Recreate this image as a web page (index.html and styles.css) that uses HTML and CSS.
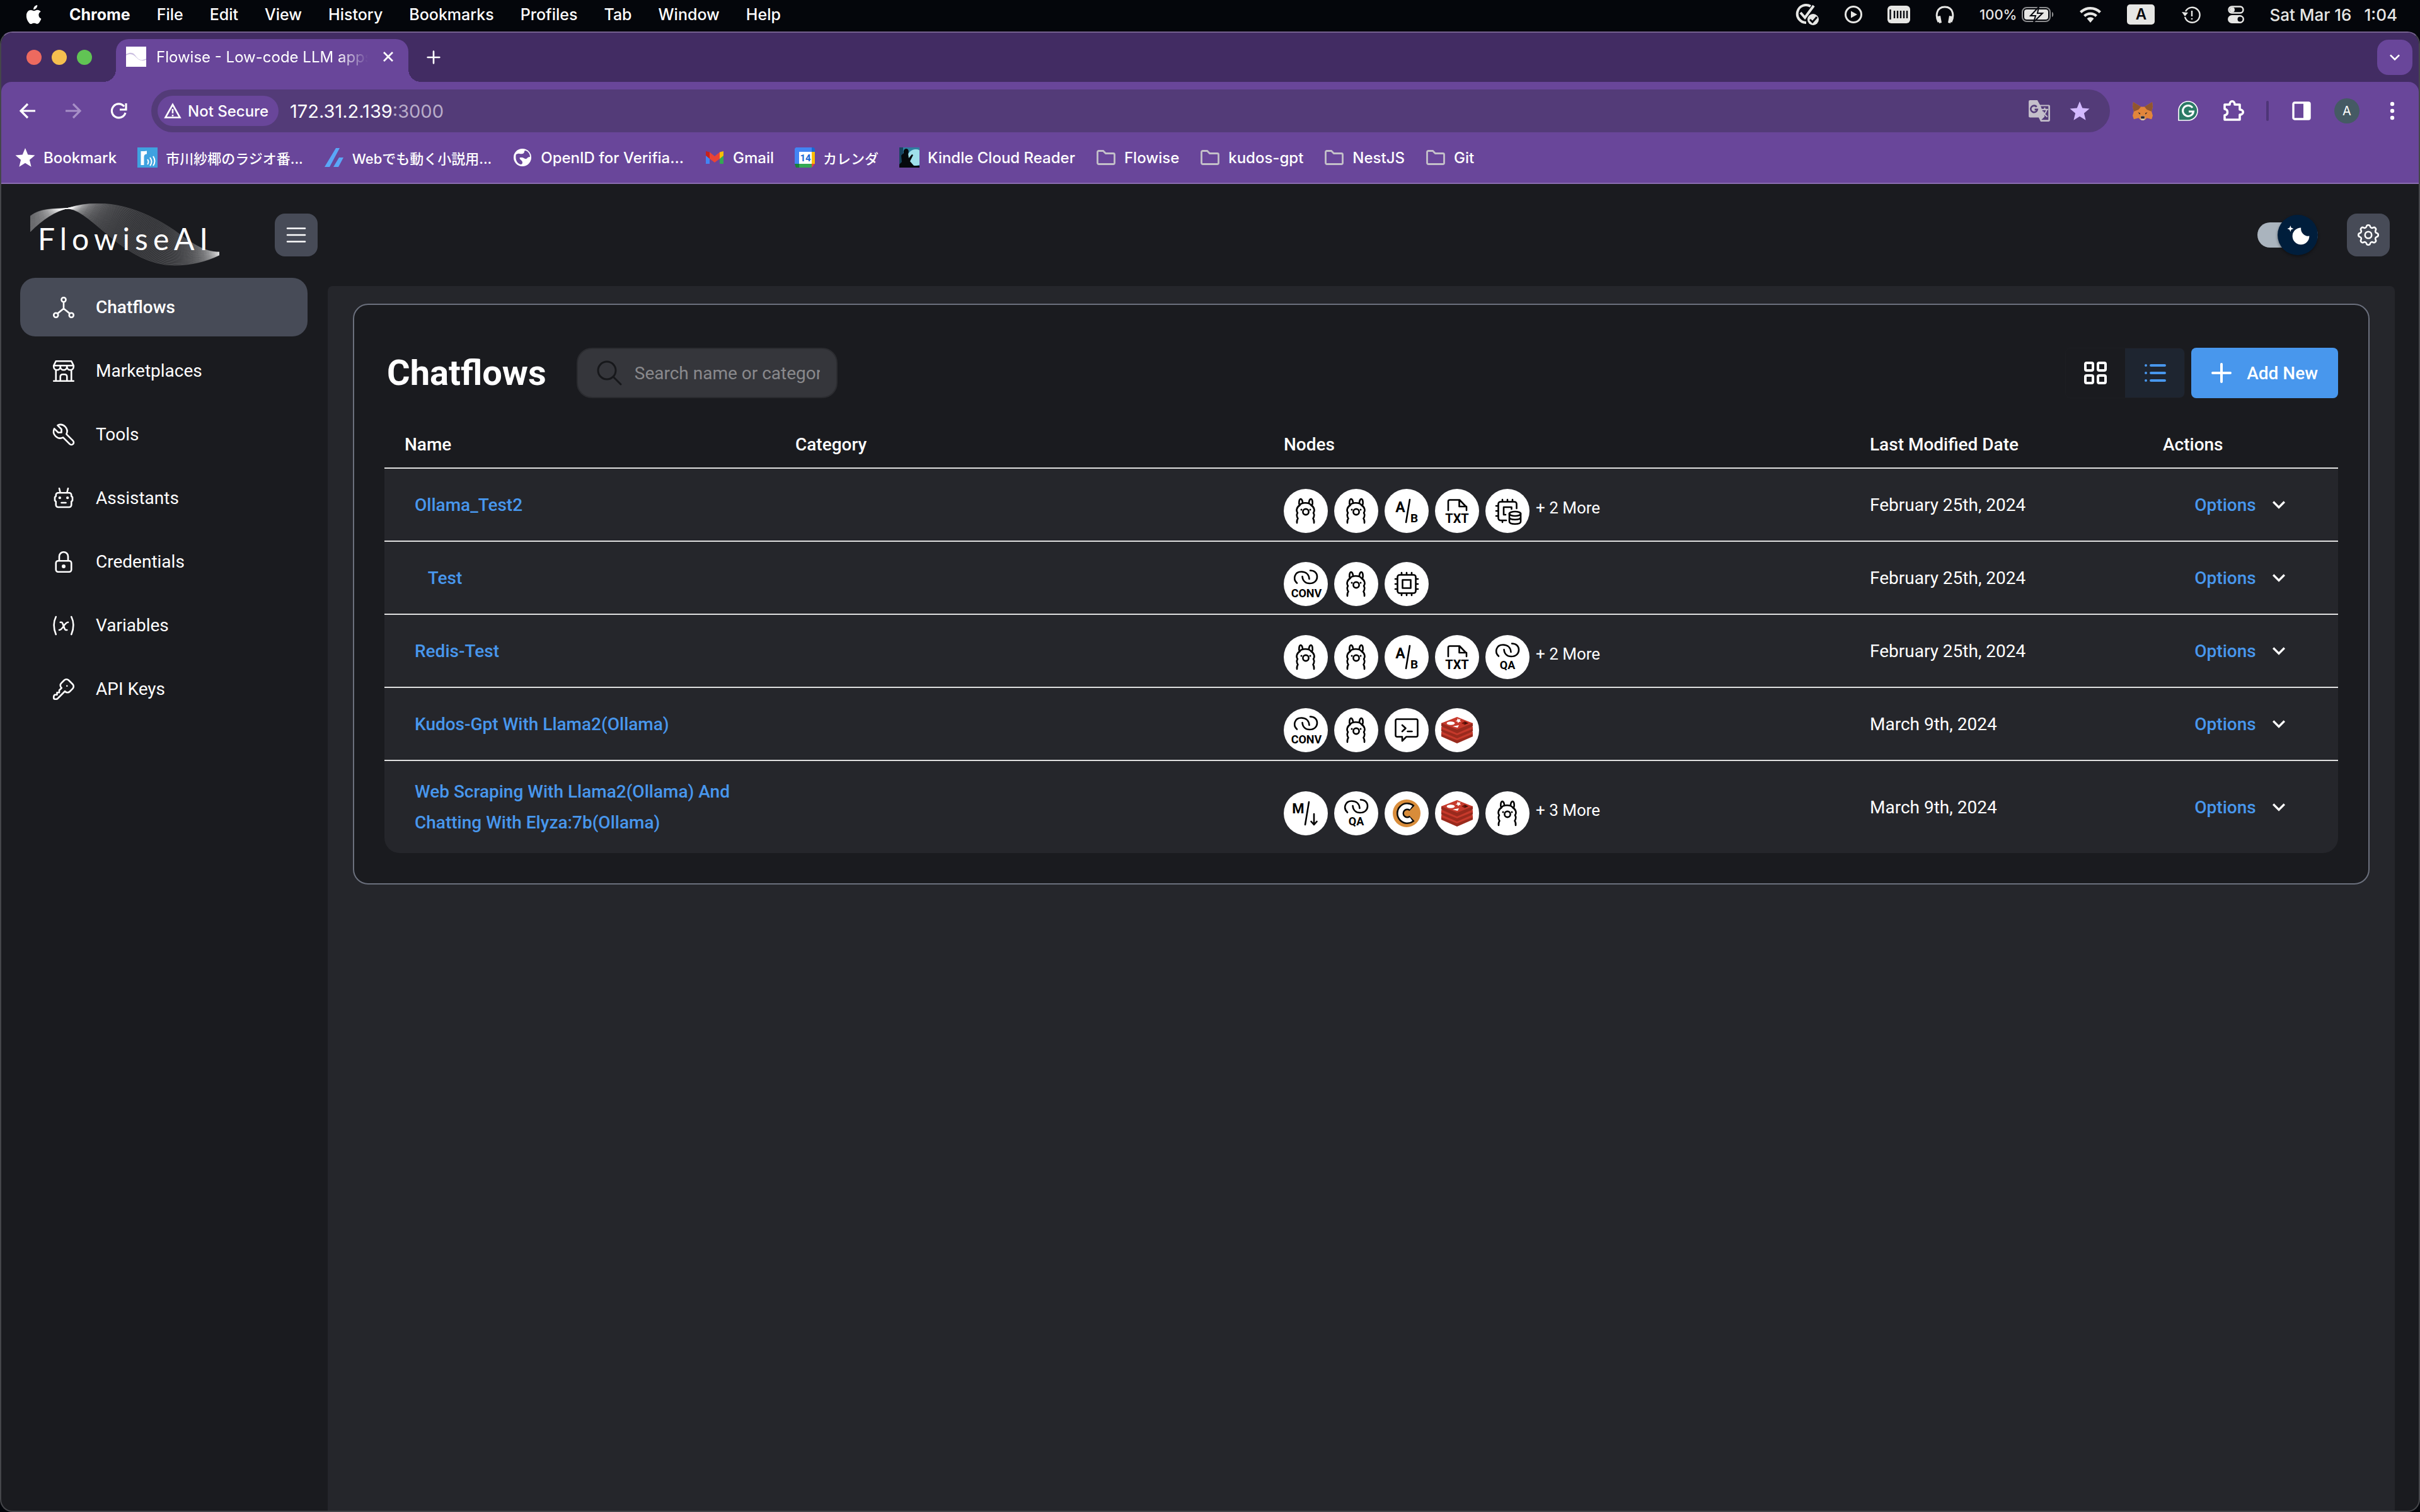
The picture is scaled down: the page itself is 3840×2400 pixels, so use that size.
FILE: index.html
```html
<!DOCTYPE html>
<html lang="en">
<head>
<meta charset="utf-8">
<title>Flowise - Low-code LLM apps builder</title>
<link rel="stylesheet" href="styles.css">
</head>
<body>
<svg class="sprite" aria-hidden="true">
  <symbol id="apple" viewBox="0 0 26 32"><path d="M18.200 1c.2 2-.6 3.800-1.700 5.100-1.100 1.300-2.800 2.200-4.400 2.100-.2-1.900.7-3.800 1.700-5C15 1.900 16.800 1.100 18.200 1zM23.600 11.600c-2.100 1.300-3.300 3.100-3.200 5.500.1 2.800 1.700 4.700 4 5.700-.9 2.600-2.100 4.800-3.700 6.700-1 1.100-2.200 1.700-3.600 1.300-1.500-.5-2.500-1-4-1-1.600 0-2.700.6-4.100 1.100-1.500.4-2.700-.3-3.700-1.500C1.900 25.700.5 21.300.9 16.800 1.300 12.500 4 9 8 9c1.800 0 3.200 1.200 4.900 1.200C14.600 10.200 16 8.800 18.300 8.800c2.100.1 4 .9 5.300 2.800z" fill="#fff"/></symbol>
  <symbol id="task" viewBox="0 0 40 36"><path d="M26 5A14 14 0 1 0 19 31" fill="none" stroke="#e6e6e4" stroke-width="4"/><path d="m10 15 7 8L31 4" fill="none" stroke="#e6e6e4" stroke-width="4"/><circle cx="30" cy="26" r="9" fill="#e6e6e4"/><path d="m25 26 4 4 7-8" fill="none" stroke="#05070d" stroke-width="3"/></symbol>
  <symbol id="play" viewBox="0 0 28 28"><circle cx="14" cy="14" r="12.500" fill="none" stroke="#e6e6e4" stroke-width="3"/><path d="M10 8.500v11l10-5.500z" fill="#e6e6e4"/></symbol>
  <symbol id="memory" viewBox="0 0 36 28"><rect width="36" height="28" rx="6" fill="#e6e6e4"/><path d="M4.500 6v16M11 8v12M16 8v12M21 8v12M26 8v12M31 8v12" stroke="#05070d" stroke-width="2.400"/></symbol>
  <symbol id="headphones" viewBox="0 0 30 30"><path d="M5 27C0 18 1 3 15 3s15 15 10 24" fill="none" stroke="#e6e6e4" stroke-width="3"/><path d="m3 18 5-1 2 11-4 1zM27 18l-5-1-2 11 4 1z" fill="#e6e6e4"/></symbol>
  <symbol id="battery" viewBox="0 0 51 24"><rect x="1" y="1" width="44" height="22" rx="7" fill="none" stroke="#8b8c8e" stroke-width="2"/><path d="M48 8c3 1 3 7 0 8z" fill="#8b8c8e"/><rect x="4" y="4" width="38" height="16" rx="4" fill="#e6e6e4"/><path d="M27 0 14 14h8l-3 10 14-14h-8z" fill="#e6e6e4" stroke="#05070d" stroke-width="2"/></symbol>
  <symbol id="wifi" viewBox="0 0 36 26"><path d="M2.500 9.500a22 22 0 0 1 31 0M8.500 15.500a13.500 13.500 0 0 1 19 0" fill="none" stroke="#e6e6e4" stroke-width="4.200"/><path d="M18 26l-5.500-6.500a8 8 0 0 1 11 0z" fill="#e6e6e4"/></symbol>
  <symbol id="timer" viewBox="0 0 36 30"><path d="M9 10a12 12 0 1 1-1 9" fill="none" stroke="#e6e6e4" stroke-width="2.400"/><path d="m3 11 5 7 5-6z" fill="#e6e6e4"/><path d="M19 9v9M19 21v2" stroke="#e6e6e4" stroke-width="2.400"/></symbol>
  <symbol id="control" viewBox="0 0 26 28"><rect x="1.500" y="1.500" width="23" height="10" rx="5" fill="none" stroke="#e6e6e4" stroke-width="2.400"/><circle cx="7" cy="6.500" r="4" fill="#e6e6e4"/><rect y="15" width="26" height="13" rx="6.500" fill="#e6e6e4"/><circle cx="19.500" cy="21.500" r="4" fill="#05070d"/></symbol>

  <symbol id="favicon" viewBox="0 0 32 32"><path fill="#fff" d="M0 0h32v32H0z"/><path d="M0 12c12-6 14 2 18 6s8 4 14 1v2c-8 3-12 0-16-4S8 10 0 14z" fill="#cbbfe0"/></symbol>
  <symbol id="close" viewBox="0 0 20 20"><path d="m3 3 14 14M17 3 3 17" fill="none" stroke="#fff" stroke-width="2.800"/></symbol>
  <symbol id="plus" viewBox="0 0 24 24"><path d="M12 5v14M5 12h14" fill="none" stroke="currentColor" stroke-width="2" stroke-linecap="round"/></symbol>
  <symbol id="caret" viewBox="0 0 24 24"><path d="M7.410 8.590 12 13.170l4.590-4.580L18 10l-6 6-6-6z" fill="currentColor"/></symbol>
  <symbol id="back" viewBox="0 0 40 40"><path d="M32 20H10M20 9 9 20l11 11" fill="none" stroke="currentColor" stroke-width="3.200"/></symbol>
  <symbol id="forward" viewBox="0 0 40 40"><path d="M8 20h22M20 9l11 11-11 11" fill="none" stroke="currentColor" stroke-width="3.200"/></symbol>
  <symbol id="reload" viewBox="0 0 40 40"><path d="M29 13a11 11 0 1 0 2 10" fill="none" stroke="currentColor" stroke-width="3.200"/><path d="M32 8v10H22" fill="none" stroke="currentColor" stroke-width="3.200"/></symbol>
  <symbol id="warning" viewBox="0 0 28 26"><path d="M14 3 2.500 23.500h23z" fill="none" stroke="#fff" stroke-width="2.600"/><path d="M14 10v7M14 19v2.500" stroke="#fff" stroke-width="2.600"/></symbol>
  <symbol id="translate" viewBox="0 0 34 34"><path d="M3 1h11l4 7h13a2 2 0 0 1 2 2v21a2 2 0 0 1-2 2H19l-3-6H3a2 2 0 0 1-2-2V3a2 2 0 0 1 2-2z" fill="#c4bfcb"/><path d="M19 10h11.500v20.500H20l5-5z" fill="#533b78"/><path d="M13 11a5 5 0 1 0 1 4h-4" fill="none" stroke="#533b78" stroke-width="2.400"/><path d="M20 15h10M25 12v3M28 15c-1 5-4 8-8 10M22 18c2 4 4 6 7 8" fill="none" stroke="#c4bfcb" stroke-width="2"/></symbol>
  <symbol id="star" viewBox="0 0 32 32"><path d="m16 1 4.300 10.500 11.200.9-8.600 7.300 2.700 11L16 24.800l-9.600 5.900 2.700-11L.5 12.400l11.200-.9z" fill="currentColor"/></symbol>
  <symbol id="fox" viewBox="0 0 34 32"><path d="m1 1 13 8h6l13-8 1 8-2 8 2 7-2 6-8-2-3 3h-8l-3-3-8 2-2-6 2-7-2-8z" fill="#e2853b"/><path d="m1 1 13 8-4 5-8 3-2-8zM33 1 20 9l4 5 8 3 2-8z" fill="#91562f"/><path d="m14 24 3 1 3-1 1 6-2 2h-4l-2-2z" fill="#d9c6ae"/><path d="M14 25h6v4h-6zM9 18l4 2-1 2zM25 18l-4 2 1 2z" fill="#2b2730"/></symbol>
  <symbol id="grammar" viewBox="0 0 32 32"><path d="M1 31V16A15 15 0 1 1 16 31z" fill="#2c7a66" stroke="#fff" stroke-width="1.600"/><path d="M23 11a8.500 8.500 0 1 0 1.500 6H17" fill="none" stroke="#fff" stroke-width="3"/></symbol>
  <symbol id="puzzle" viewBox="0 0 36 36"><path d="M4 8h8c0-7 8-7 8 0h8v8c7 0 7 8 0 8v8H4v-7c6-1 6-9 0-10z" fill="none" stroke="#fff" stroke-width="3.600" stroke-linejoin="round"/></symbol>
  <symbol id="panel" viewBox="0 0 30 30"><rect x="2" y="2" width="26" height="26" rx="2" fill="none" stroke="#fff" stroke-width="3.400"/><path d="M18 2h10v26H18z" fill="#fff"/></symbol>
  <symbol id="dots" viewBox="0 0 8 30"><circle cx="4" cy="4" r="3.200" fill="#fff"/><circle cx="4" cy="15" r="3.200" fill="#fff"/><circle cx="4" cy="26" r="3.200" fill="#fff"/></symbol>

  <symbol id="radio" viewBox="0 0 32 32"><path fill="#3fa2e0" d="M0 0h32v32H0z"/><path d="M8 28V6M8 15c0-4 2-7 7-7" fill="none" stroke="#fff" stroke-width="5"/><path d="M16 19q3 4 0 8M20 16q5 7 0 13M25 14q5 8 0 15" fill="none" stroke="#fff" stroke-width="2"/></symbol>
  <symbol id="slashes" viewBox="0 0 32 32"><path d="M19 1h6L9 31H1zM24 16h7l-8 15h-8z" fill="#5aa7f8"/></symbol>
  <symbol id="globe" viewBox="0 0 32 32"><circle cx="16" cy="16" r="14" fill="#fff"/><path d="M6 10c6-1 8 2 12-1 2-2 0-4 3-4 5 2 7 6 7 10-5 0-4 4-8 3-4-2-3-2-8-2-2 3 4 4 4 8 0 2-1 3-3 3-6-2-9-8-7-17z" fill="#69469a"/><path d="M16 5c-3 1-1 4-5 4-2 0-3 2-6 2 1-3 6-7 11-6z" fill="#fff"/></symbol>
  <symbol id="gmail" viewBox="0 0 32 32"><path d="M2 9v17h6V14z" fill="#4285f4"/><path d="M30 9v17h-6V14z" fill="#34a853"/><path d="M24 7.500 30 6v7l-6 5z" fill="#fbbc04"/><path d="M8 7.500 2 6v7l6 5z" fill="#c5221f"/><path d="m8 7.500 8 6.500 8-6.500V18l-8 6-8-6z" fill="#ea4335"/></symbol>
  <symbol id="calendar" viewBox="0 0 32 32"><path d="M2 0h25v7H7v19H0V2z" fill="#4285f4"/><path d="M27 0h3l2 2v5h-5z" fill="#1967d2"/><path d="M27 7h5v19h-5z" fill="#fbbc04"/><path d="M7 26h20v6H7z" fill="#34a853"/><path d="M0 26h7v6H2z" fill="#188038"/><path d="M27 26h5l-5 6z" fill="#ea4335"/><path d="M7 7h20v19H7z" fill="#fff"/><text x="17" y="22" text-anchor="middle" class="icon-text" font-size="15" fill="#1967d2">14</text></symbol>
  <symbol id="kindle" viewBox="0 0 32 32"><path fill="#2f7fa0" d="M0 0h32v32H0z"/><circle cx="26" cy="16" r="13" fill="#9fe0ea"/><path d="M0 0h6v32H0z" fill="#17445f"/><path d="M0 32v-5l4-4-1-10c1-2 3-3 4-4-1-4 1-7 4-7s5 4 3 8l1 7 5-6 2 1-5 10 6 7h9v3z" fill="#05090c"/></symbol>
  <symbol id="folder" viewBox="0 0 32 32"><path d="M2.500 7.500a2 2 0 0 1 2-2h7l4 4h12a2 2 0 0 1 2 2v13a2 2 0 0 1-2 2h-23a2 2 0 0 1-2-2z" fill="none" stroke="#c4c1c9" stroke-width="2.800"/></symbol>

  <symbol id="menu" viewBox="0 0 24 24"><path class="line" d="M4 6h16M4 12h16M4 18h16"/></symbol>
  <symbol id="hierarchy" viewBox="0 0 24 24"><path class="line" d="M10 5a2 2 0 1 0 4 0 2 2 0 1 0-4 0M3 19a2 2 0 1 0 4 0 2 2 0 1 0-4 0M17 19a2 2 0 1 0 4 0 2 2 0 1 0-4 0M6.500 17.500 12 13l5.500 4.500M12 7v6"/></symbol>
  <symbol id="store" viewBox="0 0 24 24"><path class="line" d="M3 21h18M3 7v1a3 3 0 0 0 6 0V7m0 1a3 3 0 0 0 6 0V7m0 1a3 3 0 0 0 6 0V7H3l2-4h14l2 4M5 21V10.850M19 21V10.850M9 21v-4a2 2 0 0 1 2-2h2a2 2 0 0 1 2 2v4"/></symbol>
  <symbol id="tool" viewBox="0 0 24 24"><path class="line" d="M7 10h3V7L6.500 3.500a6 6 0 0 1 8 8l6 6a2 2 0 0 1-3 3l-6-6a6 6 0 0 1-8-8L7 10"/></symbol>
  <symbol id="robot" viewBox="0 0 24 24"><path class="line" d="M7 7h10a2 2 0 0 1 2 2v1l1 1v3l-1 1v3a2 2 0 0 1-2 2H7a2 2 0 0 1-2-2v-3l-1-1v-3l1-1V9a2 2 0 0 1 2-2zM10 16h4M9 7 8 3M15 7l1-4"/><circle cx="8.500" cy="11.500" r="1.200" fill="currentColor"/><circle cx="15.500" cy="11.500" r="1.200" fill="currentColor"/></symbol>
  <symbol id="lock" viewBox="0 0 24 24"><path class="line" d="M5 13a2 2 0 0 1 2-2h10a2 2 0 0 1 2 2v6a2 2 0 0 1-2 2H7a2 2 0 0 1-2-2zM8 11V7a4 4 0 1 1 8 0v4"/><circle cx="12" cy="16" r="1.700" fill="currentColor"/></symbol>
  <symbol id="variable" viewBox="0 0 24 24"><path class="line" d="M5 4c-2.500 5-2.500 10 0 16M19 4c2.500 5 2.500 10 0 16M9 9h1c1 0 1 1 2.016 3.527C13 15 13 16 14 16h1M8 16c1.500 0 3-2 4-3.500S14.500 9 16 9"/></symbol>
  <symbol id="key" viewBox="0 0 24 24"><path class="line" d="m16.555 3.843 3.602 3.602a2.877 2.877 0 0 1 0 4.069l-2.643 2.643a2.877 2.877 0 0 1-4.069 0l-.301-.301-6.558 6.558a2 2 0 0 1-1.239.578L5.172 21H4a1 1 0 0 1-.993-.883L3 20v-1.172a2 2 0 0 1 .467-1.284l.119-.130L4 17h2v-2h2v-2l2.144-2.144-.301-.301a2.877 2.877 0 0 1 0-4.069l2.643-2.643a2.877 2.877 0 0 1 4.069 0zM15 9h.01"/></symbol>
  <symbol id="gear" viewBox="0 0 24 24"><path class="line" d="M10.325 4.317c.426-1.756 2.924-1.756 3.350 0a1.724 1.724 0 0 0 2.573 1.066c1.543-.94 3.310.826 2.370 2.370a1.724 1.724 0 0 0 1.065 2.572c1.756.426 1.756 2.924 0 3.350a1.724 1.724 0 0 0-1.066 2.573c.94 1.543-.826 3.310-2.370 2.370a1.724 1.724 0 0 0-2.572 1.065c-.426 1.756-2.924 1.756-3.350 0a1.724 1.724 0 0 0-2.573-1.066c-1.543.94-3.310-.826-2.370-2.370a1.724 1.724 0 0 0-1.065-2.572c-1.756-.426-1.756-2.924 0-3.350a1.724 1.724 0 0 0 1.066-2.573c-.94-1.543.826-3.310 2.370-2.370 1 .608 2.296.070 2.572-1.065zM9 12a3 3 0 1 0 6 0 3 3 0 0 0-6 0"/></symbol>
  <symbol id="moon" viewBox="0 0 20 20"><path d="M4.200 2.500l-.7 1.800-1.800.7 1.800.7.7 1.800.6-1.800L6.700 5l-1.900-.7-.6-1.800zm15 8.300a6.700 6.700 0 1 1-6.600-6.600 5.800 5.800 0 0 0 6.600 6.600z" fill="#fff"/></symbol>
  <symbol id="search" viewBox="0 0 24 24"><path class="line" d="M3 10a7 7 0 1 0 14 0 7 7 0 1 0-14 0M21 21l-6-6"/></symbol>
  <symbol id="grid" viewBox="0 0 24 24"><path class="line bold" d="M5 4h4a1 1 0 0 1 1 1v4a1 1 0 0 1-1 1H5a1 1 0 0 1-1-1V5a1 1 0 0 1 1-1zM15 4h4a1 1 0 0 1 1 1v4a1 1 0 0 1-1 1h-4a1 1 0 0 1-1-1V5a1 1 0 0 1 1-1zM5 14h4a1 1 0 0 1 1 1v4a1 1 0 0 1-1 1H5a1 1 0 0 1-1-1v-4a1 1 0 0 1 1-1zM15 14h4a1 1 0 0 1 1 1v4a1 1 0 0 1-1 1h-4a1 1 0 0 1-1-1v-4a1 1 0 0 1 1-1z"/></symbol>
  <symbol id="list" viewBox="0 0 24 24"><path class="line bold" d="M9 6h11M9 12h11M9 18h11M5 6v.01M5 12v.01M5 18v.01"/></symbol>

  <symbol id="ollama" viewBox="0 0 70 70"><g class="ink"><path d="M21 54c-.5-3 0-5 1.500-7-2-3-2.500-6-.5-9-2.500-3-2-9 3.500-12 2-5 15-5 18 0 5.500 3 6 9 3.500 12 2 3 1.500 6-.5 9 1.500 2 2 4 1.500 7M25 26c-1.500-4-.5-10 2-10 2.500 1 3 4 3 7M45 26c1.500-4 .5-10-2-10-2.500 1-3 4-3 7"/><circle cx="35" cy="36.500" r="4.600"/></g><circle cx="28" cy="33" r="1.500"/><circle cx="42" cy="33" r="1.500"/></symbol>
  <symbol id="ab" viewBox="0 0 70 70"><path class="ink" d="m40 17-6 36"/><text x="25" y="37" text-anchor="middle" class="icon-text narrow" font-size="23">A</text><text x="47" y="53" text-anchor="middle" class="icon-text narrow" font-size="19">B</text></symbol>
  <symbol id="txt" viewBox="0 0 70 70"><path class="ink" d="M21 34V20a2.500 2.500 0 0 1 2.500-2.500H39L50 29v5M38.500 17.500V28H50"/><text x="35" y="54" text-anchor="middle" class="icon-text narrow" font-size="20">TXT</text></symbol>
  <symbol id="cpudb" viewBox="0 0 70 70"><path class="ink" d="M33 50h-9a3.500 3.500 0 0 1-3.500-3.500V24a3.500 3.500 0 0 1 3.500-3.500h22a3.500 3.500 0 0 1 3.500 3.500v7M32 41h-3V29h12.500v3M27 20v-3M35 20v-3M43 20v-3M20 27h-3M20 35h-3M20 43h-3M27 50v3"/><path class="ink" d="M38 39v13c0 5 18 5 18 0V39M38 45c0 5 18 5 18 0"/><ellipse class="ink" cx="47" cy="39.500" rx="9" ry="3.500"/></symbol>
  <symbol id="cpu" viewBox="0 0 70 70"><path class="ink" d="M24 20.500h22a3.500 3.500 0 0 1 3.500 3.500v22a3.500 3.500 0 0 1-3.500 3.500H24a3.500 3.500 0 0 1-3.500-3.500V24a3.500 3.500 0 0 1 3.500-3.500zM28.500 28.500h13v13h-13zM27 20v-3M35 20v-3M43 20v-3M27 50v3M35 50v3M43 50v3M20 27h-3M20 35h-3M20 43h-3M50 27h3M50 35h3M50 43h3"/></symbol>
  <symbol id="link" viewBox="0 0 70 70"><path class="ink" d="M21 33.500C14 27 17 15.500 28 15.500c8 0 12 5 12.500 11.500M29.500 23c.5 7 5 11 11.500 11 8 0 12-5 12-10.500 0-6.500-5-10-11-10"/></symbol>
  <symbol id="conv" viewBox="0 0 70 70"><use href="#link"/><text x="36" y="56" text-anchor="middle" class="icon-text narrow" font-size="18">CONV</text></symbol>
  <symbol id="qa" viewBox="0 0 70 70"><use href="#link"/><text x="35" y="54" text-anchor="middle" class="icon-text narrow" font-size="18">QA</text></symbol>
  <symbol id="prompt" viewBox="0 0 70 70"><path class="ink" d="M20 17.500h30a2.500 2.500 0 0 1 2.500 2.500v23a2.500 2.500 0 0 1-2.500 2.500H34.500L28 52v-6.500h-8a2.500 2.500 0 0 1-2.500-2.500V20a2.500 2.500 0 0 1 2.500-2.500zM28 27l5.500 5-5.500 5M36.500 37h7"/></symbol>
  <symbol id="redis" viewBox="0 0 70 70"><path d="m10 41 25-9 25 9v4L35 56 10 45z" fill="#992a1d"/><path d="m10 38 25-9 25 9v3L35 51 10 41z" fill="#c6392b"/><path d="m10 32 25-9 25 9v5L35 48 10 37z" fill="#992a1d"/><path d="m10 30 25-9 25 9v3L35 43 10 33z" fill="#c6392b"/><path d="m10 24 25-8 25 8v5L35 40 10 29z" fill="#992a1d"/><path d="m10 24 25-10 25 10-25 10z" fill="#c6392b"/><ellipse cx="25" cy="24" rx="6.500" ry="2.800" fill="#fff"/><path d="m28 29 10-2-2 4zM36 16l1.500 2 3-.5-1 2.500 2 1.500-3 .2-2 1.800-.8-2.300-3.200-.5 2.600-1.300z" fill="#fff"/><path d="m47 21-5 3 5 2.500z" fill="#7b1509"/><path d="m47 21 6 3-6 2.500z" fill="#4a0f08"/></symbol>
  <symbol id="cheerio" viewBox="0 0 70 70"><circle cx="35" cy="35" r="22" fill="#d88c3a"/><path d="M43.500 27A11 11 0 1 0 43.500 43" fill="none" stroke="#0b0b0b" stroke-width="12"/><path d="M42.200 25.900A11 11 0 1 0 42.200 44.100" fill="none" stroke="#fff" stroke-width="7"/></symbol>
  <symbol id="markdown" viewBox="0 0 70 70"><path class="ink" d="m40 17-6 36M48 36v16M43.500 48l4.500 5 4.500-5"/><text x="23" y="35" text-anchor="middle" class="icon-text narrow" font-size="22">M</text></symbol>
</svg>

<header class="menubar">
  <nav class="menubar-menus" aria-label="Menu bar">
    <button class="menu-item" aria-label="Apple"><svg class="i-apple"><use href="#apple"/></svg></button>
    <button class="menu-item app-name">Chrome</button>
    <button class="menu-item">File</button>
    <button class="menu-item">Edit</button>
    <button class="menu-item">View</button>
    <button class="menu-item">History</button>
    <button class="menu-item">Bookmarks</button>
    <button class="menu-item">Profiles</button>
    <button class="menu-item">Tab</button>
    <button class="menu-item">Window</button>
    <button class="menu-item">Help</button>
  </nav>
  <div class="status">
    <svg class="i-task"><use href="#task"/></svg>
    <svg class="i-play"><use href="#play"/></svg>
    <svg class="i-memory"><use href="#memory"/></svg>
    <svg class="i-headphones"><use href="#headphones"/></svg>
    <span class="charge">100% <svg class="i-battery"><use href="#battery"/></svg></span>
    <svg class="i-wifi"><use href="#wifi"/></svg>
    <span class="input-source">A</span>
    <svg class="i-timer"><use href="#timer"/></svg>
    <svg class="i-control"><use href="#control"/></svg>
    <span class="clock"><span>Sat Mar 16</span><span>1:04</span></span>
  </div>
</header>

<div class="window">
  <div class="tabstrip">
    <div class="lights"><span class="light red"></span><span class="light yellow"></span><span class="light green"></span></div>
    <div class="tab">
      <svg class="i32"><use href="#favicon"/></svg>
      <span class="tab-title">Flowise - Low-code LLM apps</span>
      <button class="tab-close" aria-label="Close tab"><svg class="i20"><use href="#close"/></svg></button>
    </div>
    <button class="new-tab" aria-label="New tab"><svg class="i32"><use href="#plus"/></svg></button>
    <button class="tab-search" aria-label="Search tabs"><svg class="i32"><use href="#caret"/></svg></button>
  </div>

  <div class="toolbar">
    <div class="nav-row">
      <button class="nav-button" aria-label="Back"><svg class="i40"><use href="#back"/></svg></button>
      <button class="nav-button" aria-label="Forward" disabled><svg class="i40"><use href="#forward"/></svg></button>
      <button class="nav-button" aria-label="Reload"><svg class="i40"><use href="#reload"/></svg></button>
      <div class="omnibox">
        <button class="security"><svg class="i-warning"><use href="#warning"/></svg>Not Secure</button>
        <label class="address"><input class="host" type="text" value="172.31.2.139" aria-label="Address"><span class="port">:3000</span></label>
        <button class="nav-button" aria-label="Translate"><svg class="i36"><use href="#translate"/></svg></button>
        <button class="nav-button saved" aria-label="Edit bookmark"><svg class="i32"><use href="#star"/></svg></button>
      </div>
      <button class="nav-button" aria-label="MetaMask"><svg class="i32"><use href="#fox"/></svg></button>
      <button class="nav-button" aria-label="Grammarly"><svg class="i32"><use href="#grammar"/></svg></button>
      <button class="nav-button" aria-label="Extensions"><svg class="i36"><use href="#puzzle"/></svg></button>
      <span class="divider"></span>
      <button class="nav-button" aria-label="Side panel"><svg class="i30"><use href="#panel"/></svg></button>
      <button class="nav-button avatar" aria-label="Profile">A</button>
      <button class="nav-button" aria-label="Menu"><svg class="i30"><use href="#dots"/></svg></button>
    </div>
    <nav class="bookmarks" aria-label="Bookmarks">
      <a class="bookmark" href="#"><svg class="i32"><use href="#star"/></svg>Bookmark</a>
      <a class="bookmark" href="#"><svg class="i32"><use href="#radio"/></svg><span class="ja" lang="ja">市川紗椰のラジオ番...</span></a>
      <a class="bookmark" href="#"><svg class="i32"><use href="#slashes"/></svg><span class="ja" lang="ja">Webでも動く小説用...</span></a>
      <a class="bookmark" href="#"><svg class="i32"><use href="#globe"/></svg>OpenID for Verifia...</a>
      <a class="bookmark" href="#"><svg class="i32"><use href="#gmail"/></svg>Gmail</a>
      <a class="bookmark" href="#"><svg class="i32"><use href="#calendar"/></svg><span class="ja" lang="ja">カレンダ</span></a>
      <a class="bookmark" href="#"><svg class="i32"><use href="#kindle"/></svg>Kindle Cloud Reader</a>
      <a class="bookmark" href="#"><svg class="i32"><use href="#folder"/></svg>Flowise</a>
      <a class="bookmark" href="#"><svg class="i32"><use href="#folder"/></svg>kudos-gpt</a>
      <a class="bookmark" href="#"><svg class="i32"><use href="#folder"/></svg>NestJS</a>
      <a class="bookmark" href="#"><svg class="i32"><use href="#folder"/></svg>Git</a>
    </nav>
  </div>

  <div class="app">
    <aside class="sidebar">
      <div class="brand">
        <a class="logo" href="#" aria-label="FlowiseAI home">
          <svg class="wave" viewBox="0 0 300 100"></svg>
          <span class="wordmark">FlowiseAI</span>
        </a>
        <button class="square-button" aria-label="Toggle sidebar"><svg class="i42"><use href="#menu"/></svg></button>
      </div>
      <nav class="side-nav">
        <a class="side-link active" href="#"><svg class="i42"><use href="#hierarchy"/></svg>Chatflows</a>
        <a class="side-link" href="#"><svg class="i42"><use href="#store"/></svg>Marketplaces</a>
        <a class="side-link" href="#"><svg class="i42"><use href="#tool"/></svg>Tools</a>
        <a class="side-link" href="#"><svg class="i42"><use href="#robot"/></svg>Assistants</a>
        <a class="side-link" href="#"><svg class="i42"><use href="#lock"/></svg>Credentials</a>
        <a class="side-link" href="#"><svg class="i42"><use href="#variable"/></svg>Variables</a>
        <a class="side-link" href="#"><svg class="i42"><use href="#key"/></svg>API Keys</a>
      </nav>
    </aside>

    <div class="content">
      <header class="topbar">
        <label class="theme-switch"><input type="checkbox" checked aria-label="Dark mode"><span class="thumb"><svg class="i40"><use href="#moon"/></svg></span></label>
        <button class="square-button" aria-label="Settings"><svg class="i42"><use href="#gear"/></svg></button>
      </header>
      <main class="main">
        <section class="card">
          <div class="card-head">
            <h1 class="title">Chatflows</h1>
            <label class="search"><svg class="i48"><use href="#search"/></svg><input type="text" placeholder="Search name or category" aria-label="Search name or category"></label>
            <div class="view-toggle">
              <button class="view-button" aria-label="Card view"><svg class="i48"><use href="#grid"/></svg></button>
              <button class="view-button selected" aria-label="List view"><svg class="i48"><use href="#list"/></svg></button>
            </div>
            <button class="add-new"><svg class="i48"><use href="#plus"/></svg>Add New</button>
          </div>
          <table class="flows">
            <colgroup><col class="w20"><col class="w25"><col class="w30"><col class="w15"><col class="w10"></colgroup>
            <thead>
              <tr><th>Name</th><th>Category</th><th>Nodes</th><th>Last Modified Date</th><th>Actions</th></tr>
            </thead>
            <tbody>
              <tr>
                <td><button class="flow-name">Ollama_Test2</button></td><td></td>
                <td><div class="nodes"><svg class="node"><use href="#ollama"/></svg><svg class="node"><use href="#ollama"/></svg><svg class="node"><use href="#ab"/></svg><svg class="node"><use href="#txt"/></svg><svg class="node"><use href="#cpudb"/></svg><span class="more">+ 2 More</span></div></td>
                <td>February 25th, 2024</td>
                <td class="actions"><button class="options">Options<svg class="i40"><use href="#caret"/></svg></button></td>
              </tr>
              <tr>
                <td><button class="flow-name">Test</button></td><td></td>
                <td><div class="nodes"><svg class="node"><use href="#conv"/></svg><svg class="node"><use href="#ollama"/></svg><svg class="node"><use href="#cpu"/></svg></div></td>
                <td>February 25th, 2024</td>
                <td class="actions"><button class="options">Options<svg class="i40"><use href="#caret"/></svg></button></td>
              </tr>
              <tr>
                <td><button class="flow-name">Redis-Test</button></td><td></td>
                <td><div class="nodes"><svg class="node"><use href="#ollama"/></svg><svg class="node"><use href="#ollama"/></svg><svg class="node"><use href="#ab"/></svg><svg class="node"><use href="#txt"/></svg><svg class="node"><use href="#qa"/></svg><span class="more">+ 2 More</span></div></td>
                <td>February 25th, 2024</td>
                <td class="actions"><button class="options">Options<svg class="i40"><use href="#caret"/></svg></button></td>
              </tr>
              <tr>
                <td><button class="flow-name">Kudos-Gpt With Llama2(Ollama)</button></td><td></td>
                <td><div class="nodes"><svg class="node"><use href="#conv"/></svg><svg class="node"><use href="#ollama"/></svg><svg class="node"><use href="#prompt"/></svg><svg class="node"><use href="#redis"/></svg></div></td>
                <td>March 9th, 2024</td>
                <td class="actions"><button class="options">Options<svg class="i40"><use href="#caret"/></svg></button></td>
              </tr>
              <tr>
                <td><button class="flow-name">Web Scraping With Llama2(Ollama) And Chatting With Elyza:7b(Ollama)</button></td><td></td>
                <td><div class="nodes"><svg class="node"><use href="#markdown"/></svg><svg class="node"><use href="#qa"/></svg><svg class="node"><use href="#cheerio"/></svg><svg class="node"><use href="#redis"/></svg><svg class="node"><use href="#ollama"/></svg><span class="more">+ 3 More</span></div></td>
                <td>March 9th, 2024</td>
                <td class="actions"><button class="options">Options<svg class="i40"><use href="#caret"/></svg></button></td>
              </tr>
            </tbody>
          </table>
        </section>
      </main>
    </div>
  </div>
</div>
<script src="wave.js"></script>
</body>
</html>
```

FILE: styles.css
```css
* { box-sizing: border-box; }

body {
  margin: 0;
  min-height: 100vh;
  display: flex;
  flex-direction: column;
  background: #04060b;
  color: #fff;
  font-family: Roboto, sans-serif;
  font-size: 28px;
}

button, input { font: inherit; color: inherit; }
button { padding: 0; border: 0; background: none; display: flex; align-items: center; justify-content: center; }
a { color: inherit; text-decoration: none; }
svg { display: block; flex: none; }

svg.sprite { display: none; }
.line { fill: none; stroke: currentColor; stroke-width: 1.5; stroke-linecap: round; stroke-linejoin: round; }
.line.bold { stroke-width: 2; }
.ink { fill: none; stroke: #000; stroke-width: 2.6; stroke-linecap: round; stroke-linejoin: round; }
.icon-text { font-family: Roboto, sans-serif; font-weight: 700; }
.icon-text.narrow { font-family: "Liberation Sans Narrow", Roboto, sans-serif; }

.i20 { width: 20px; height: 20px; }
.i30 { width: 30px; height: 30px; }
.i32 { width: 32px; height: 32px; }
.i36 { width: 36px; height: 36px; }
.i40 { width: 40px; height: 40px; }
.i42 { width: 42px; height: 42px; }
.i48 { width: 48px; height: 48px; }

/* macOS menu bar */
.menubar, .tabstrip, .toolbar { font-family: Inter, "Noto Sans CJK JP", sans-serif; }
.menubar {
  height: 50px;
  display: flex;
  justify-content: space-between;
  align-items: center;
  padding: 0 36px 4px 40px;
  font-size: 25px;
  font-weight: 500;
}
.menubar-menus { display: flex; align-items: center; gap: 42px; }
.app-name { font-weight: 700; }
.status { display: flex; align-items: center; gap: 40px; color: #e6e6e4; }
.clock { display: flex; gap: 20px; font-size: 26px; }
.charge { display: flex; align-items: center; gap: 8px; font-size: 22px; }
.input-source { width: 44px; height: 32px; border-radius: 5px; background: #e6e6e4; color: #05070d; font-size: 24px; font-weight: 600; line-height: 32px; text-align: center; }
.i-apple { width: 28px; height: 32px; }
.i-task { width: 40px; height: 36px; }
.i-play { width: 28px; height: 28px; }
.i-memory { width: 36px; height: 28px; }
.i-headphones { width: 30px; height: 30px; }
.i-battery { width: 51px; height: 24px; }
.i-wifi { width: 36px; height: 26px; }
.i-timer { width: 36px; height: 30px; }
.i-control { width: 26px; height: 28px; }
.i-warning { width: 28px; height: 26px; }

/* browser window */
.window {
  flex: 1;
  display: flex;
  flex-direction: column;
  border: 2px solid #45464a;
  border-top-color: #75608f;
  border-radius: 20px;
  background: #1a1b1f;
  overflow: hidden;
}

.tabstrip { height: 78px; display: flex; align-items: center; padding: 0 10px 0 40px; background: #422c63; font-size: 24px; }
.lights { display: flex; gap: 16px; }
.light { width: 24px; height: 24px; border-radius: 50%; }
.red { background: #ed6a5f; }
.yellow { background: #f5bf4f; }
.green { background: #61c454; }
.tab {
  position: relative;
  align-self: flex-end;
  width: 464px;
  height: 68px;
  margin-left: 38px;
  padding: 0 22px 12px 16px;
  display: flex;
  align-items: center;
  gap: 16px;
  border-radius: 20px 20px 0 0;
  background: #69469a;
}
.tab::before, .tab::after { content: ""; position: absolute; bottom: 0; width: 20px; height: 20px; }
.tab::before { right: 100%; background: radial-gradient(circle at 0 0, transparent 20px, #69469a 20px); }
.tab::after { left: 100%; background: radial-gradient(circle at 100% 0, transparent 20px, #69469a 20px); }
.tab-title { flex: 1; min-width: 0; white-space: nowrap; mask-image: linear-gradient(90deg, #000 86%, transparent); }
.tab-close { margin-left: 6px; }
.new-tab { margin-left: 24px; }
.tab-search { width: 56px; height: 56px; margin-left: auto; border-radius: 18px; background: #69469a; }

.toolbar { background: #69469a; border-bottom: 2px solid #8a6db0; padding: 12px 22px 0; box-shadow: 0 -20px #422c63; border-radius: 16px 16px 0 0; }
.tabstrip { position: relative; }
.nav-row { display: flex; align-items: center; gap: 32px; }
.nav-button { width: 40px; height: 40px; flex: none; }
.nav-button:disabled { color: #a78fc7; }
.omnibox { flex: 1; height: 68px; display: flex; align-items: center; gap: 24px; padding: 0 28px 0 10px; border-radius: 34px; background: #533b78; }
.security { height: 48px; gap: 10px; padding: 0 16px 0 10px; border-radius: 24px; background: #69469a; font-size: 24px; font-weight: 500; }
.address { flex: 1; display: flex; align-items: center; margin-left: -6px; font-size: 29px; }
.host { field-sizing: content; padding: 0; border: 0; background: none; outline: 0; }
.port { color: #b9adc9; }
.saved { color: #d3b9ff; }
.divider { width: 4px; height: 32px; border-radius: 2px; background: #4e3577; }
.avatar { border-radius: 50%; background: #455a64; font-size: 20px; }

.bookmarks { display: flex; align-items: center; gap: 33px; height: 80px; font-size: 24px; font-weight: 500; }
.bookmark { display: flex; align-items: center; gap: 13px; white-space: nowrap; }
.ja { font-size: 22px; }

/* Flowise app */
.app { flex: 1; display: flex; }
.sidebar { width: 518px; flex: none; padding: 31px 14px 31px 30px; }
.brand { display: flex; align-items: center; gap: 88px; padding-left: 16px; }
.logo { position: relative; flex: none; width: 300px; height: 100px; display: flex; align-items: center; padding-left: 12px; }
.wave { position: absolute; inset: 0; width: 300px; height: 100px; fill: none; stroke: #fff; stroke-width: 0.6; stroke-opacity: 0.38; }
.wordmark { position: relative; padding-top: 12px; font-family: Lato, sans-serif; font-size: 48px; line-height: 56px; letter-spacing: 8px; }
.square-button { width: 68px; height: 68px; flex: none; border-radius: 16px; background: #474b57; }
.side-nav { display: flex; flex-direction: column; gap: 8px; margin-top: 18px; }
.side-link { width: 456px; height: 93px; display: flex; align-items: center; gap: 30px; padding-left: 48px; border-radius: 24px; }
.side-link.active { background: #474b57; font-weight: 500; }

.content { flex: 1; display: flex; flex-direction: column; }
.topbar { height: 162px; display: flex; align-items: center; justify-content: flex-end; gap: 46px; padding-right: 46px; }
.theme-switch { position: relative; display: flex; align-items: center; width: 96px; height: 64px; }
.theme-switch input { appearance: none; width: 96px; height: 40px; margin: 0; border-radius: 20px; background: #aab4be; }
.thumb { position: absolute; right: 0; top: 0; width: 64px; height: 64px; border-radius: 50%; background: #001e3c; display: grid; place-items: center; box-shadow: 0 2px 4px #0006; }

.main { flex: 1; margin-right: 38px; padding: 28px 40px; border-radius: 8px 8px 0 0; background: #25262b; }
.card { border: 2px solid #6b707d; border-radius: 24px; padding: 68px 48px 48px; background: #1a1b1f; }
.card-head { display: flex; align-items: center; margin-bottom: 36px; }
.title { margin: 0 48px 0 4px; font-size: 56px; font-weight: 700; line-height: 64px; }
.search { width: 414px; height: 80px; display: flex; align-items: center; gap: 16px; padding: 0 26px; border: 2px solid #2b2c30; border-radius: 24px; background: #35363b; color: #17181b; }
.search input { flex: 1; min-width: 0; padding: 0; border: 0; background: none; outline: 0; color: #fff; }
.search input::placeholder { color: #89898c; opacity: 1; }
.view-toggle { display: flex; margin: 0 10px 0 auto; border: 1px solid #1d1e22; border-radius: 8px; overflow: hidden; }
.view-button { width: 94px; height: 78px; }
.view-button.selected { background: #1e2530; color: #4897ed; }
.add-new { height: 80px; gap: 16px; padding: 0 32px 0 24px; border-radius: 8px; background: #4897ed; font-weight: 500; }

.flows { width: 100%; table-layout: fixed; border-spacing: 0; border-radius: 24px; overflow: hidden; }
.w10 { width: 10%; }
.w15 { width: 15%; }
.w20 { width: 20%; }
.w25 { width: 25%; }
.w30 { width: 30%; }
.flows th { height: 76px; padding: 0 32px; border-bottom: 2px solid #e0e0e0; font-weight: 500; text-align: left; }
.flows td { height: 116px; padding: 0 32px; border-bottom: 2px solid #e0e0e0; background: #25262b; }
.flows tr:last-child td { height: 146px; border-bottom: 0; }
.flow-name { min-width: 128px; padding: 12px 16px; color: #4897ed; font-weight: 500; line-height: 49px; text-align: left; }
.nodes { display: flex; align-items: center; gap: 10px; padding-top: 20px; }
.node { width: 70px; height: 70px; border-radius: 50%; background: #fff; }
.more { padding-bottom: 10px; font-size: 26px; }
.options { margin: 0 auto; gap: 16px; padding: 12px 8px 12px 16px; color: #4897ed; font-weight: 500; }
.options svg { color: #fff; }
```

FILE: wave.js
```js
// Ribbon behind the wordmark: fine lines blended between its two edge curves.
const edgeA = [0, 20, 15, 8, 35, 8, 61, 8, 100, 14, 150, 98, 229, 98, 255, 98, 280, 92, 300, 82];
const edgeB = [0, 45, 20, 25, 40, 12, 61, 7, 120, -12, 180, 10, 229, 43, 255, 62, 275, 77, 300, 77];
const wave = document.querySelector('.wave');
const count = 44;
for (let i = 0; i <= count; i++) {
  const t = i / count;
  const p = edgeA.map((a, k) => (a + (edgeB[k] - a) * t).toFixed(1));
  const path = document.createElementNS('http://www.w3.org/2000/svg', 'path');
  path.setAttribute('d', `M${p[0]} ${p[1]}C${p.slice(2).join(' ')}`);
  wave.append(path);
}
```
